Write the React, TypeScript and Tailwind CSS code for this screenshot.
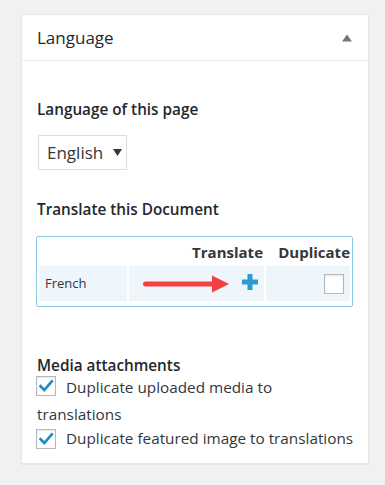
import React from "react";

const font = { fontFamily: '"Open Sans", "Noto Sans", sans-serif' };

function Check({ checked }: { checked?: boolean }) {
  return (
    <span className="inline-flex h-[20px] w-[20px] shrink-0 items-center justify-center border border-[#b4b9be] bg-white shadow-[inset_0_1px_2px_rgba(0,0,0,0.1)]">
      {checked && (
        <svg width="16" height="16" viewBox="0 0 16 16">
          <path d="M2.5 8.2 L6.3 12 L13.8 3.4" fill="none" stroke="#1e8cbe" strokeWidth="2.6" strokeLinecap="square" />
        </svg>
      )}
    </span>
  );
}

export default function App() {
  return (
    <div className="min-h-[485px] w-[385px] bg-[#f1f1f1] pt-[14px] pl-[21px]" style={font}>
      <div className="h-[450px] w-[348px] border border-[#e5e5e5] bg-white shadow-[0_1px_1px_rgba(0,0,0,0.04)]">
        <div className="flex h-[46px] items-center justify-between border-b border-[#eeeeee] pl-[15px] pr-[16px]">
          <span className="text-[17px] text-[#23282d]">Language</span>
          <svg width="10" height="8" viewBox="0 0 10 8" className="mt-[1px]">
            <path d="M0 7.5 L5 0.5 L10 7.5 Z" fill="#72777c" />
          </svg>
        </div>
        <div className="pl-[15px] pr-[10px]">
          <div className="mt-[38px] text-[15.3px] font-semibold leading-[20px] text-[#23282d]">Language of this page</div>
          <div className="mt-[16px] ml-[1px] flex h-[35px] w-[89px] items-center border border-[#dddddd] bg-white pl-[8px]">
            <span className="text-[17px] text-[#32373c]">English</span>
            <svg width="9" height="7" viewBox="0 0 9 7" className="ml-[10px]">
              <path d="M0 0 L9 0 L4.5 7 Z" fill="#32373c" />
            </svg>
          </div>
          <div className="mt-[29px] text-[15.3px] font-semibold leading-[20px] text-[#23282d]">Translate this Document</div>
          <div className="mt-[17px] -ml-[1px] h-[71px] w-[317px] rounded-[2px] border border-[#8cc8e8] p-[2px]">
            <div className="flex h-[27px] items-center text-[15px] font-bold text-[#32373c]">
              <div className="w-[88px]" />
              <div className="ml-[2px] w-[135px] pr-[1px] text-right">Translate</div>
              <div className="ml-[2px] w-[84px] text-right">Duplicate</div>
            </div>
            <div className="flex h-[35px]">
              <div className="flex w-[88px] items-center bg-[#eef6fc] pl-[6px] text-[13px] text-[#32373c]">French</div>
              <div className="ml-[2px] flex w-[135px] items-center bg-[#eef6fc]">
                <svg width="88" height="18" viewBox="0 0 88 18" className="ml-[14px] mt-[1px]">
                  <line x1="2.5" y1="9" x2="72" y2="9" stroke="#f44040" strokeWidth="5" strokeLinecap="round" />
                  <path d="M69 0.5 L86 9 L69 17.5 Z" fill="#f44040" />
                </svg>
                <svg width="16" height="16" viewBox="0 0 16 16" className="ml-[11px] -mt-[4px]">
                  <path d="M5.5 0 H10.5 V5.5 H16 V10.5 H10.5 V16 H5.5 V10.5 H0 V5.5 H5.5 Z" fill="#2e9bd0" />
                </svg>
              </div>
              <div className="ml-[2px] flex w-[84px] items-center justify-end bg-[#eef6fc] pr-[6px]">
                <Check />
              </div>
            </div>
          </div>
          <div className="mt-[48px] text-[15.3px] font-semibold leading-[20px] text-[#23282d]">Media attachments</div>
          <div className="-mt-[1px] text-[15.3px] leading-[27px] text-[#32373c]">
            <span className="relative top-[2px] mr-[10px] -ml-[1px] inline-flex align-top"><Check checked /></span>
            Duplicate uploaded media to
            <br />
            translations
          </div>
          <div className="flex h-[21px] items-center whitespace-nowrap text-[15.3px] leading-[21px] text-[#32373c]">
            <span className="mr-[10px] -ml-[1px] inline-flex"><Check checked /></span>
            <span>Duplicate featured image to translations</span>
          </div>
        </div>
      </div>
    </div>
  );
}
